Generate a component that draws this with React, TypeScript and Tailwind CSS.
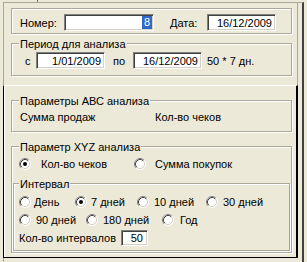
import React from 'react';

function Field({ className, children }: { className: string; children: React.ReactNode }) {
  return (
    <div
      className={`flex items-center justify-end bg-white border border-t-[#808080] border-l-[#808080] border-r-white border-b-white shadow-[inset_1px_1px_0_#404040,inset_-1px_-1px_0_#D4D0C8] ${className}`}
    >
      {children}
    </div>
  );
}

function Radio({ checked }: { checked?: boolean }) {
  return (
    <svg width="12" height="12" viewBox="0 0 12 12" className="shrink-0">
      <circle cx="6" cy="6" r="5" fill="#fff" />
      <path d="M9.89 2.11A5.5 5.5 0 0 0 2.11 9.89" fill="none" stroke="#808080" />
      <path d="M2.11 9.89A5.5 5.5 0 0 0 9.89 2.11" fill="none" stroke="#fff" />
      <path d="M9.18 2.82A4.5 4.5 0 0 0 2.82 9.18" fill="none" stroke="#404040" />
      <path d="M2.82 9.18A4.5 4.5 0 0 0 9.18 2.82" fill="none" stroke="#D4D0C8" />
      {checked && <circle cx="6" cy="6" r="2" fill="#000" />}
    </svg>
  );
}

function Group({
  title,
  legendLeft = 'left-[7px]',
  className,
  children,
}: {
  title?: string;
  legendLeft?: string;
  className: string;
  children: React.ReactNode;
}) {
  return (
    <div className={`relative shrink-0 border border-[#ACA899] shadow-[1px_1px_0_#fff,inset_1px_1px_0_#fff] ${className}`}>
      {title && (
        <span className={`absolute -top-[7px] ${legendLeft} bg-[#ECE9D8] px-[1px] leading-[14px] whitespace-nowrap`}>
          {title}
        </span>
      )}
      {children}
    </div>
  );
}

function Option({ label, checked, className, gap = 'ml-[5px]' }: { label: string; checked?: boolean; className: string; gap?: string }) {
  return (
    <div className={`flex items-center shrink-0 ${className}`}>
      <Radio checked={checked} />
      <span className={`${gap} whitespace-nowrap`}>{label}</span>
    </div>
  );
}

export default function App() {
  return (
    <div className="w-[307px] h-[262px] bg-[#ECE9D8] flex flex-col overflow-hidden text-[11px] leading-[14px] text-black font-['Liberation_Sans',Arial,sans-serif]">
      <div className="h-[2px] shrink-0 flex">
        <div className="ml-[37px] w-px bg-[#716F64]" />
      </div>

      <div className="flex-1 ml-[3px] w-[301px] border-t border-l border-[#ACA899] border-r-2 border-r-[#404040] flex flex-col">
        {/* Upper panel */}
        <div className="h-[82px] w-[294px] shrink-0 border-r border-[#ACA899] pl-[7px] pt-[5px] flex flex-col">
          <Group className="w-[281px] h-[26px] pt-[5px] pl-[8px]">
            <div className="flex items-center h-[17px]">
              <span className="w-[44px] shrink-0">Номер:</span>
              <Field className="w-[90px] h-[17px] pr-px">
                <span className="bg-[#316AC5] text-white px-[2px] leading-[13px] h-[13px]">8</span>
              </Field>
              <span className="ml-[16px] w-[37px] shrink-0">Дата:</span>
              <Field className="w-[69px] h-[17px] pr-[3px]">16/12/2009</Field>
            </div>
          </Group>

          <Group title="Период для анализа" className="mt-[9px] w-[281px] h-[33px] pt-[8px] pl-[13px]">
            <div className="flex items-center h-[17px]">
              <span className="w-[11px] shrink-0">с</span>
              <Field className="w-[69px] h-[17px] pr-[3px]">1/01/2009</Field>
              <span className="ml-[8px] w-[20px] shrink-0">по</span>
              <Field className="w-[69px] h-[17px] pr-[3px]">16/12/2009</Field>
              <span className="ml-[5px] whitespace-nowrap">50 * 7 дн.</span>
            </div>
          </Group>
        </div>

        {/* Lower panel */}
        <div className="-ml-px w-[295px] h-[173px] shrink-0 border-t border-t-white border-l border-l-black border-r-2 border-r-black border-b border-b-black shadow-[inset_1px_0_0_#fff] pl-[7px] pt-[14px] flex flex-col">
          <Group title="Параметры АВС анализа" className="w-[281px] h-[32px] pt-[9px] pl-[8px]">
            <div className="flex items-center h-[14px]">
              <span className="w-[135px] shrink-0">Сумма продаж</span>
              <span>Кол-во чеков</span>
            </div>
          </Group>

          <Group title="Параметр XYZ анализа" className="mt-[14px] w-[281px] h-[107px] pt-[10px] flex flex-col">
            <div className="flex items-center h-[14px] pl-[7px]">
              <Option label="Кол-во чеков" checked className="w-[115px]" gap="ml-[10px]" />
              <Option label="Сумма покупок" className="" gap="ml-[9px]" />
            </div>

            <Group title="Интервал" legendLeft="left-[5px]" className="mt-[12px] mx-[1px] w-[277px] h-[68px] pt-[11px] pl-[5px] flex flex-col">
              <div className="flex items-center h-[14px]">
                <Option label="День" className="w-[56px]" gap="ml-[3px]" />
                <Option label="7 дней" checked className="w-[62px]" gap="ml-[4px]" />
                <Option label="10 дней" className="w-[69px]" />
                <Option label="30 дней" className="" />
              </div>
              <div className="flex items-center h-[14px] mt-[4px]">
                <Option label="90 дней" className="w-[67px]" />
                <Option label="180 дней" className="w-[76px]" />
                <Option label="Год" className="" gap="ml-[6px]" />
              </div>
              <div className="flex items-center h-[16px] mt-[3px]">
                <span className="w-[102px] shrink-0 whitespace-nowrap">Кол-во интервалов</span>
                <Field className="w-[27px] h-[16px] pr-[4px]">50</Field>
              </div>
            </Group>
          </Group>
        </div>
      </div>
    </div>
  );
}
